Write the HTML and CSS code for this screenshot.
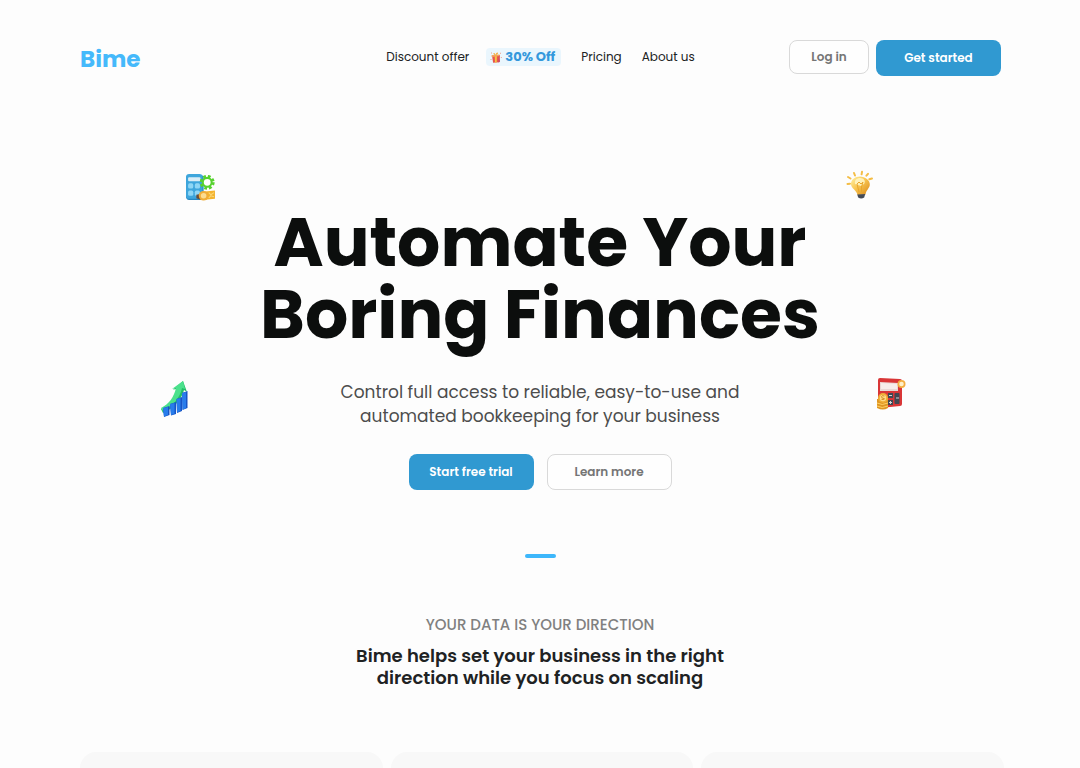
FILE: index.html
```html
<!DOCTYPE html>
<html lang="en">
<head>
<meta charset="utf-8">
<meta name="viewport" content="width=device-width, initial-scale=1">
<title>Bime</title>
<link rel="stylesheet" href="styles.css">
</head>
<body>
<header class="header">
  <a class="brand" href="#">Bime</a>
  <nav class="nav">
    <a class="nav-link" href="#">Discount offer</a>
    <a class="badge" href="#">
      <svg class="badge-icon" viewBox="0 0 12 12" aria-hidden="true">
        <path d="M2 4.500l8-.6-.6 7.400-6.300.4z" fill="#e9564b"/>
        <path d="M4.700 4.600l2.200-.2-.2 7H5z" fill="#f6c344"/>
        <path d="M1.500 4.200l8-.8.2 1.700-8 .8z" fill="#f2a55f"/>
        <path d="M5.500 4.300C3.400 3.800 2.800 2.200 4 2c1 0 1.400 1.200 1.500 2.300C5.700 2.800 6.800 1.200 7.800 1.700c.8.7-.8 2.200-2.300 2.600z" fill="#f3ae3d"/>
        <path d="M1 1.500h1v1H1zM10 1.800h1v1h-1zM10.800 6h1v1h-1zM.5 8h1v1h-1z" fill="#f0a08c"/>
        <path d="M9 4.400l1 6-1.500 1z" fill="#bd4470"/>
      </svg>
      30% Off
    </a>
    <a class="nav-link" href="#">Pricing</a>
    <a class="nav-link" href="#">About us</a>
  </nav>
  <div class="account">
    <button class="button outline compact" type="button">Log in</button>
    <button class="button primary" type="button">Get started</button>
  </div>
</header>

<main class="main">
  <section class="hero">
    <svg class="sticker sticker-planner" viewBox="0 0 30 28" aria-hidden="true">
      <rect x="1" y="2" width="17" height="24" rx="3" fill="#2386c2"/>
      <rect x="1" y="1" width="16" height="24" rx="3" fill="#3ea6dc"/>
      <rect x="3" y="4" width="12" height="4" rx="1" fill="#d9edf6"/>
      <g fill="#8ed6f5"><rect x="3" y="10" width="5" height="5" rx="1.500"/><rect x="9.500" y="10" width="5" height="5" rx="1.500"/><rect x="3" y="17" width="5" height="5" rx="1.500"/><rect x="9.500" y="17" width="5" height="5" rx="1.500"/></g>
      <circle cx="21.500" cy="9" r="5.800" fill="none" stroke="#57d22f" stroke-width="2.800" stroke-dasharray="2.600 1.950"/>
      <circle cx="21.500" cy="9" r="4.300" fill="#fff" stroke="#57d22f" stroke-width="2"/>
      <path d="M11 21l5-1v6l-5-1.500z" fill="#674c3b"/>
      <path d="M17 18l12-1v8l-12 1z" fill="#f4b32e"/>
      <circle cx="18" cy="22" r="4.700" fill="#efad38"/><circle cx="18" cy="22" r="2.700" fill="#fbdc91"/>
      <path d="M23 19l2 2 3-2M23 24l2-2 3 1" fill="none" stroke="#fbd777"/>
    </svg>
    <svg class="sticker sticker-idea" viewBox="0 0 28 30" aria-hidden="true">
      <defs><linearGradient id="bulb" x1="0" y1="0" x2="1" y2="1"><stop offset="0" stop-color="#fff2a4"/><stop offset=".45" stop-color="#f9c652"/><stop offset="1" stop-color="#d88818"/></linearGradient></defs>
      <path d="M5 14.500c-.3-5 4-8 9-8s10.300 3.600 9.800 8.500c-.4 3.500-3.700 5-4.300 9.500l-8 .5c-.8-5-6-6-6.500-10.500z" fill="url(#bulb)"/>
      <path d="M9 14c-1-4 2-6 5-6 4 0 6 3 4 6l-3 2-3-1z" fill="#fff7c9" opacity=".85"/>
      <path d="M11 14l2-2 2 2 2-2-1.500 5v5M11 14l2 8" fill="none" stroke="#e9a72c"/>
      <path d="M11.200 24.400l8-.4-1 3.600q-3 2-6 0z" fill="#454b56"/>
      <g stroke="#f4bd45" stroke-width="2" stroke-linecap="round"><path d="M1.500 14l2.500-.3M2 7l2.500 1.500M8 3l1 2.500M16 1.800l-.4 2.500M22 3.800l-1.600 1.900M26 8.500l-2.700.8"/></g>
    </svg>
    <svg class="sticker sticker-growth" viewBox="0 0 30 38" aria-hidden="true">
      <path d="M1 29C9 25 15 18 17 9l-4 .5L23 1l4 11-3-2C22 19 13 29 3 33z" fill="#23bd67"/>
      <path d="M1 28C9 24 14 17 16 8l-4 1L23 1l2 8-3-1C20 18 12 27 3 31z" fill="#4be18c"/>
      <path d="M3 28l6.500-2v9L4 37zM10 24l6-2v12l-5 1.500zM16.500 19l5.500-2v14l-5 2zM22 13l5.500-2v17l-5 2z" fill="#1754c5"/>
      <path d="M3 28l5-1v8l-4 1.500zM10 24l4.500-1v11l-3.500 1zM16.500 19l4-1v13l-3.500 1.500zM22 13l4-1v16.500l-3.500 1z" fill="#287ceb"/>
    </svg>
    <svg class="sticker sticker-ledger" viewBox="0 0 30 34" aria-hidden="true">
      <path d="M2 3q0-2 2-2l20 1q2 0 2 2v23q0 2-2 2L4 31q-2 0-2-2z" fill="#d93637"/>
      <path d="M4 5l18 1v8H4z" fill="#ead9d6"/><path d="M5 6l16 1v5H5z" fill="#f7eeeb"/>
      <g fill="#424853"><rect x="12" y="16" width="5" height="5"/><rect x="18.500" y="16" width="5" height="11" rx="1"/><rect x="12" y="23" width="5" height="5"/></g>
      <path d="M13 18.500h3M14.500 24v3M13 25.500h3M20 21h3" stroke="#d2d4d8"/>
      <circle cx="25.500" cy="7" r="4" fill="#f4ae40"/><circle cx="25.500" cy="7" r="2.300" fill="#fff0c9"/>
      <path d="M1 22h11v9q-5 3-11 0z" fill="#df9623"/><path d="M1 26q5 3 11 0M1 29q5 3 11 0" fill="none" stroke="#ffd166"/>
      <circle cx="7" cy="21" r="5" fill="#efad35"/><circle cx="7" cy="21" r="3.200" fill="#ffdb86"/>
      <path d="M8.500 19q-3-1-3 .7t3 2q0 1.500-3 .6" fill="none" stroke="#d48c24"/>
    </svg>
    <h1 class="title">Automate Your<br>Boring Finances</h1>
    <p class="lead">Control full access to reliable, easy-to-use and<br>automated bookkeeping for your business</p>
    <div class="actions">
      <button class="button primary" type="button">Start free trial</button>
      <button class="button outline" type="button">Learn more</button>
    </div>
  </section>
  <div class="divider"></div>
  <section class="intro">
    <p class="eyebrow">YOUR DATA IS YOUR DIRECTION</p>
    <h2 class="subtitle">Bime helps set your business in the right<br>direction while you focus on scaling</h2>
  </section>
  <div class="cards">
    <div class="card"></div>
    <div class="card"></div>
    <div class="card"></div>
  </div>
</main>
</body>
</html>
```
FILE: styles.css
```css
* { box-sizing: border-box; }

body {
  display: flex;
  flex-direction: column;
  min-height: 100vh;
  margin: 0;
  background: #fdfdfd;
  color: #202223;
  font-family: Poppins, Inter, sans-serif;
}

a { color: inherit; text-decoration: none; }
h1, h2, p { margin: 0; }

.header {
  display: grid;
  grid-template-columns: 1fr auto 1fr;
  align-items: start;
  padding: 40px 79px 0 80px;
}

.brand {
  color: #45b9fb;
  font-size: 23px;
  font-weight: 700;
  line-height: 38px;
}

.nav {
  display: flex;
  align-items: center;
  gap: 20px;
  padding-top: 8px;
  font-size: 12px;
  line-height: 18px;
}

.badge {
  display: flex;
  align-items: center;
  gap: 3px;
  margin-left: -3px;
  padding: 0 6px 0 4px;
  border-radius: 4px;
  background: #eaf6fd;
  color: #3498dc;
  font-size: 13px;
  font-weight: 700;
}

.badge-icon { width: 12px; height: 12px; }

.account {
  display: flex;
  justify-content: flex-end;
  align-items: flex-start;
  gap: 7px;
}

.button {
  min-width: 125px;
  height: 36px;
  padding: 0 16px;
  border: 1px solid transparent;
  border-radius: 8px;
  font-family: inherit;
  font-size: 12px;
  font-weight: 600;
  white-space: nowrap;
}

.primary { background: #3099d1; color: #fff; }
.outline { border-color: #d9d9d9; background: #fefefe; color: #757575; }
.compact { min-width: 80px; height: 34px; }

.main {
  display: flex;
  flex: 1;
  flex-direction: column;
}

.hero {
  position: relative;
  padding-top: 129px;
  text-align: center;
}

.title {
  color: #0c0e0d;
  font-size: 68px;
  font-weight: 700;
  line-height: 72px;
}

.lead {
  margin-top: 29px;
  color: #4d4d4d;
  font-size: 17px;
  line-height: 24px;
}

.actions {
  display: flex;
  justify-content: center;
  gap: 13px;
  margin-top: 26px;
}

.sticker { position: absolute; }
.sticker-planner { top: 95px; left: calc(50% - 355px); width: 31px; height: 29px; }
.sticker-idea { top: 92px; left: calc(50% + 306px); width: 28px; height: 30px; }
.sticker-growth { top: 302px; left: calc(50% - 380px); width: 30px; height: 38px; }
.sticker-ledger { top: 299px; left: calc(50% + 336px); width: 30px; height: 34px; }

.divider {
  align-self: center;
  width: 31px;
  height: 4px;
  margin-top: 64px;
  border-radius: 2px;
  background: #3db7fb;
}

.intro { margin-top: 56px; text-align: center; }

.eyebrow {
  color: #808080;
  font-size: 15px;
  font-weight: 500;
  line-height: 22px;
}

.subtitle {
  margin-top: 9px;
  font-size: 18px;
  font-weight: 600;
  line-height: 22px;
}

.cards {
  display: grid;
  flex: 1;
  grid-template-columns: repeat(3, 1fr);
  gap: 8px;
  margin-top: 63px;
  padding: 0 76px 0 80px;
}

.card {
  border-radius: 20px 20px 0 0;
  background: #f8f8f8;
}
```
